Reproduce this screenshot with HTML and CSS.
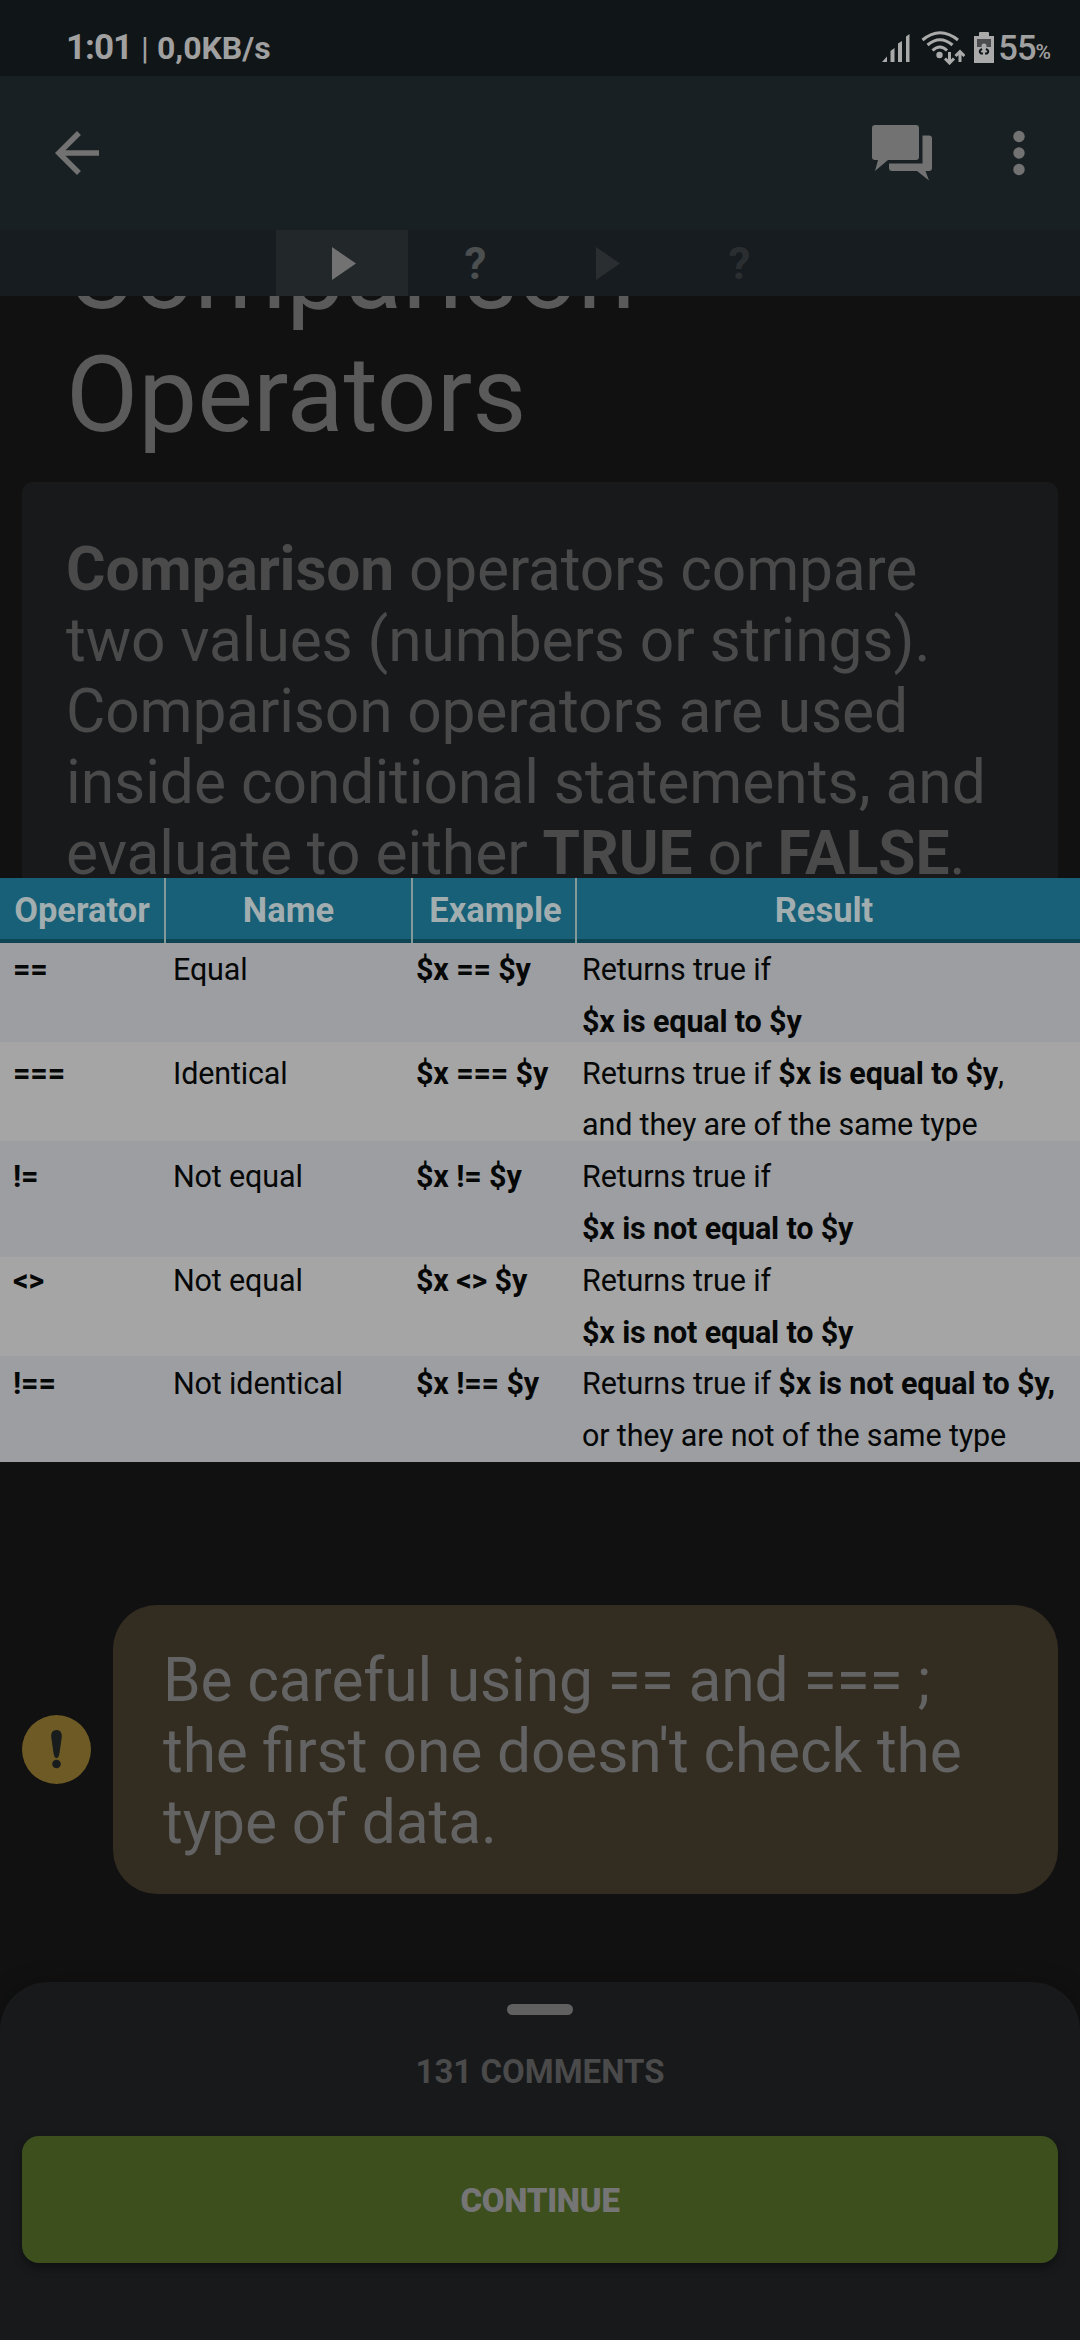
FILE: index.html
```html
<!DOCTYPE html>
<html lang="en">
<head>
<meta charset="utf-8">
<title>Comparison Operators</title>
<link rel="stylesheet" href="styles.css">
</head>
<body>
<div class="screen">
  <div class="status">
    <div class="status-left"><span class="clock">1:01</span><span class="bar">|</span><span class="speed">0,0KB/s</span></div>
    <div class="status-right">
      <svg class="signal" width="28" height="28" viewBox="0 0 28 28"><path d="M0 28L5 22.500V28ZM8.500 28V17L12.500 14V28ZM16 28V9.500L20 7V28ZM24 28V2.500L27.500 0V28Z"/></svg>
      <svg class="wifi" width="44" height="34" viewBox="0 0 44 34"><g class="line"><path d="M1.500 9Q19 -5.500 37 9"/><path d="M6.500 14Q19 3.500 31.500 14"/><path d="M11.500 19.500Q19 12.500 26 19.500"/><path d="M28.500 21V31.500M24 27.500L28.500 32L33 27.500"/><path d="M39 31V21M34.500 25L39 20.500L43.500 25"/></g><circle cx="18.500" cy="24" r="3.200"/></svg>
      <svg class="battery" width="20" height="31" viewBox="0 0 20 31"><path d="M0 4H5V1Q5 0 6 0H14Q15 0 15 1V4H20V31H0Z"/><path class="empty" d="M3 7H17V15H3Z"/><circle cx="10" cy="14" r="2.500"/><path class="mark" d="M8 17Q4 19 7 21.500H9M12 17Q16 19 13 21.500H11"/></svg>
      <span class="level">55</span><span class="percent">%</span>
    </div>
  </div>
  <div class="appbar">
    <svg width="66" height="66" viewBox="0 0 24 24"><path d="M20 11H7.830l5.590-5.590L12 4l-8 8 8 8 1.410-1.410L7.830 13H20v-2z"/></svg>
    <div class="actions">
      <svg width="60" height="56" viewBox="0 0 60 56"><path d="M3 0H44Q47 0 47 3V32Q47 35 44 35H16L3 46L6 35H3Q0 35 0 32V3Q0 0 3 0Z"/><path d="M50.500 10.500H57Q60 10.500 60 13.500V43Q60 46 57 46H53.500L57 55.500L45 46H20Q17 46 17 43V38.500H50.500Z"/></svg>
      <svg width="12" height="46" viewBox="0 0 12 46"><circle cx="6" cy="6.500" r="5.700"/><circle cx="6" cy="23" r="5.700"/><circle cx="6" cy="39.500" r="5.700"/></svg>
    </div>
  </div>
  <div class="tabs">
    <div class="tab active"><svg width="24" height="33" viewBox="0 0 24 33"><path d="M0 0L24 16.500L0 33Z"/></svg></div>
    <div class="tab open"><span>?</span></div>
    <div class="tab locked"><svg width="24" height="33" viewBox="0 0 24 33"><path d="M0 0L24 16.500L0 33Z"/></svg></div>
    <div class="tab locked"><span>?</span></div>
  </div>
  <main class="lesson">
    <h1>Comparison<br>Operators</h1>
    <div class="card"><b>Comparison</b> operators compare<br><span class="mid">two values (numbers or strings).</span><br>Comparison operators are used<br><span class="wide">inside conditional statements, and</span><br><span class="wide">evaluate to either <b>TRUE</b> or <b>FALSE</b>.</span></div>
    <div class="table">
      <div class="head"><div><span>Operator</span></div><div><span>Name</span></div><div class="example"><span>Example</span></div><div class="last"><span>Result</span></div></div>
      <div class="rows">
        <div class="row"><b>==</b><span>Equal</span><b>$x == $y</b><div><span>Returns true if</span><br><b>$x is equal to $y</b></div></div>
        <div class="row"><b>===</b><span>Identical</span><b>$x === $y</b><div><span>Returns true if <b>$x is equal to $y</b>,</span><br><span>and they are of the same type</span></div></div>
        <div class="row"><b>!=</b><span>Not equal</span><b>$x != $y</b><div><span>Returns true if</span><br><b>$x is not equal to $y</b></div></div>
        <div class="row"><b>&lt;&gt;</b><span>Not equal</span><b>$x &lt;&gt; $y</b><div><span>Returns true if</span><br><b>$x is not equal to $y</b></div></div>
        <div class="row"><b>!==</b><span>Not identical</span><b>$x !== $y</b><div><span>Returns true if <b>$x is not equal to $y,</b></span><br><span>or they are not of the same type</span></div></div>
      </div>
    </div>
    <div class="note">
      <svg width="69" height="69" viewBox="0 0 69 69"><circle class="disc" cx="34.500" cy="34.500" r="34.500"/><path class="bang" d="M34.500 15C38.500 15 40 18 39.800 22L37.500 38Q36.800 43 34.500 43T31.500 38L29.200 22C29 18 30.500 15 34.500 15Z"/><circle class="bang" cx="34.500" cy="49" r="4.300"/></svg>
      <div class="bubble">Be careful using == and === ;<br>the <span class="joined">first</span> one doesn't check the<br>type of data.</div>
    </div>
  </main>
  <div class="sheet">
    <div class="handle"></div>
    <div class="comments">131 COMMENTS</div>
    <div class="continue">CONTINUE</div>
  </div>
</div>
</body>
</html>
```
FILE: styles.css
```css
* { box-sizing: border-box; }
body { margin: 0; background: #101010; font-family: Roboto, "Liberation Sans", sans-serif; }
svg { display: block; flex: none; fill: #727272; }
b { font-weight: 700; }
.screen { width: 1080px; height: 2340px; display: flex; flex-direction: column; overflow: hidden; background: #111111; }
.status { height: 76px; flex: none; background: #101618; color: #a0a0a0; display: flex; justify-content: space-between; padding: 0 30px 0 66px; }
.status svg { fill: #aaaaaa; }
.status-left { display: flex; align-items: baseline; padding-top: 28px; line-height: 40px; font-weight: 700; }
.clock { font-size: 35px; letter-spacing: -1px; }
.bar { font-size: 32px; font-weight: 400; margin: 0 8px 0 9px; }
.speed { font-size: 32px; }
.status-right { display: flex; align-items: flex-start; }
.signal { margin-top: 34px; }
.wifi { margin: 31px 0 0 11px; }
.wifi .line { fill: none; stroke: #aaaaaa; stroke-width: 3; }
.battery { margin: 32px 0 0 9px; }
.battery .empty { fill: #4b4d4f; }
.battery .mark { fill: none; stroke: #101618; stroke-width: 2; }
.level { font-size: 34.500px; line-height: 40px; font-weight: 500; letter-spacing: -1px; margin: 28px 0 0 4px; }
.percent { font-size: 21px; line-height: 26px; font-weight: 500; letter-spacing: -1px; margin-top: 39px; }
.appbar { height: 154px; flex: none; background: #182023; display: flex; align-items: center; justify-content: space-between; padding: 0 55px 0 44px; }
.actions { display: flex; align-items: center; gap: 81px; }
.tabs { height: 66px; flex: none; background: #171c20; display: flex; justify-content: center; }
.tab { width: 132px; display: flex; align-items: center; justify-content: center; font-size: 44px; line-height: 50px; font-weight: 700; }
.tab svg { margin-left: 3px; }
.tab span { padding: 1px 0 0 3px; }
.active { background: #222729; }
.open { color: #4b4f50; }
.locked { color: #2a2e31; }
.locked svg { fill: #2a2e31; }
.lesson { height: 1686px; flex: none; overflow: hidden; color: #4a4a4a; }
h1 { margin: -85px 0 0; padding-left: 66px; font-size: 105px; line-height: 123px; font-weight: 400; color: #5a5a5a; }
.card { margin: 25px 22px 0; height: 396px; padding: 52px 44px 0; background: #17191b; border-radius: 11px 11px 0 0; font-size: 60.500px; line-height: 71px; letter-spacing: -.18px; white-space: nowrap; overflow: hidden; }
.mid { letter-spacing: -.12px; }
.wide { letter-spacing: -.05px; }
.table { height: 584px; color: #060707; white-space: nowrap; }
.head { display: grid; grid-template-columns: 166px 247px 164px 1fr; height: 65px; background: #176077; border-bottom: 4px solid #0d4553; color: #a2adb0; font-size: 34.500px; line-height: 64px; font-weight: 700; text-align: center; }
.head div { height: 65px; border-right: 2px solid #84999a; }
.head .example { padding-left: 3px; }
.head .last { border: 0; padding-right: 9px; }
.rows { height: 519px; padding-top: 1px; background: linear-gradient(#9d9ea2 99px, #a5a5a5 99px 198px, #9d9ea2 198px 314px, #a5a5a5 314px 413px, #9d9ea2 413px); }
.row { display: grid; grid-template-columns: 160px 243px 166px 1fr; padding-left: 13px; height: 103.600px; font-size: 30.500px; letter-spacing: -.15px; line-height: 51.800px; }
.note { margin-top: 143px; padding: 0 22px; display: flex; align-items: center; gap: 22px; }
.disc { fill: #6e5a25; }
.bang { fill: #191c1c; }
.bubble { flex: 1; height: 289px; padding: 40px 50px; border-radius: 44px; background: #332c20; color: #636363; font-size: 60.500px; line-height: 71px; letter-spacing: -.15px; white-space: nowrap; }
.joined { letter-spacing: 0; }
.sheet { height: 358px; flex: none; padding: 22px 22px 0; background: #17191b; border-radius: 48px 48px 0 0; box-shadow: 0 0 22px rgba(0,0,0,.25); display: flex; flex-direction: column; align-items: center; font-size: 33px; font-weight: 700; line-height: 40px; }
.handle { width: 66px; height: 11px; border-radius: 5.500px; background: #606060; }
.comments { margin-top: 37px; color: #4a4a4a; }
.continue { margin-top: 44px; width: 1036px; height: 127px; border-radius: 17px; background: #3d4f1d; color: #757575; font-weight: 900; letter-spacing: -.3px; line-height: 129px; text-align: center; box-shadow: 0 5px 9px rgba(0,0,0,.35); }
```
